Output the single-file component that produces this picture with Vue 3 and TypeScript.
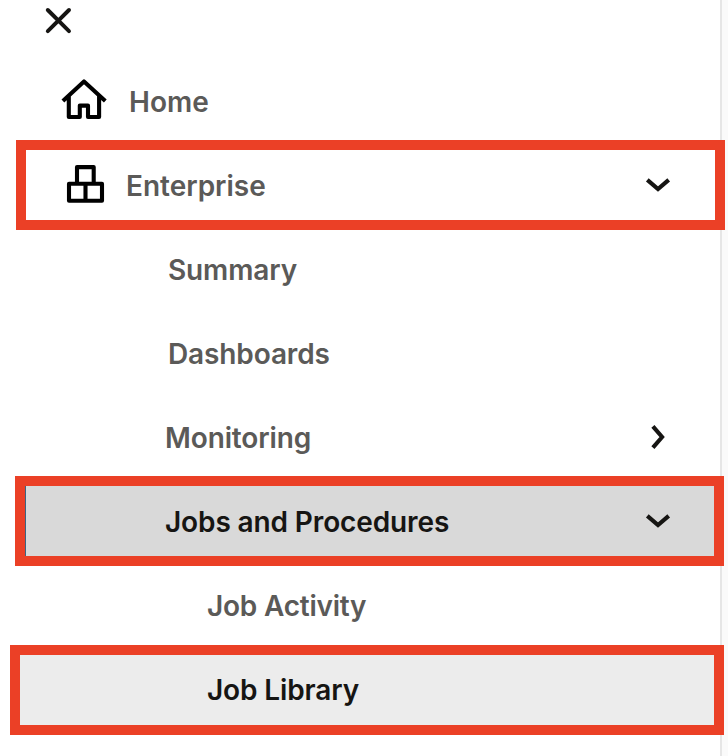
<script setup lang="ts">
interface NavItem {
  key: string
  label: string
  icon?: 'home' | 'enterprise'
  chevron?: 'down' | 'right'
  marked?: boolean
}

const items: NavItem[] = [
  { key: 'home', label: 'Home', icon: 'home' },
  { key: 'enterprise', label: 'Enterprise', icon: 'enterprise', chevron: 'down', marked: true },
  { key: 'summary', label: 'Summary' },
  { key: 'dashboards', label: 'Dashboards' },
  { key: 'monitoring', label: 'Monitoring', chevron: 'right' },
  { key: 'jobs', label: 'Jobs and Procedures', chevron: 'down', marked: true },
  { key: 'activity', label: 'Job Activity' },
  { key: 'library', label: 'Job Library', marked: true },
]
</script>

<template>
  <div class="page">
    <aside class="drawer">
      <header class="top">
        <button class="close" aria-label="Close">
          <svg width="28" height="28" viewBox="0 0 28 28">
            <path d="M2.8 3 24 24.2M24 3 2.8 24.2" />
          </svg>
        </button>
      </header>
      <nav class="nav">
        <a v-for="item in items" :key="item.key" class="row" :class="item.key">
          <svg v-if="item.icon === 'home'" class="icon" width="48" height="44" viewBox="0 0 48 44">
            <path d="M2.9 24 24 4.4 45.3 24M8.8 19V40H19.8V28.6H28V40H39.1V19" />
          </svg>
          <svg v-else-if="item.icon === 'enterprise'" class="icon" width="40" height="40" viewBox="0 0 40 40">
            <path d="M4 19.7H37V36.7H4ZM12 19.7V3.1H28.7V19.7M20.5 19.7V36.7" />
          </svg>
          <span class="label">{{ item.label }}</span>
          <svg v-if="item.chevron" class="chevron" :class="item.chevron" width="28" height="28" viewBox="0 0 28 28">
            <path v-if="item.chevron === 'down'" d="M3.3 8.9 14 18.1 24.7 8.9" />
            <path v-else d="M8.9 3.3 18.1 14 8.9 24.7" />
          </svg>
          <span v-if="item.marked" class="marker"></span>
        </a>
      </nav>
    </aside>
  </div>
</template>

<style>
body {
  background: #fafafa;
}
</style>

<style scoped>
.page {
  height: 756px;
  overflow: hidden;
  background: #fafafa;
  font-family: Inter, "Liberation Sans", sans-serif;
}
.drawer {
  box-sizing: border-box;
  width: 722px;
  height: 756px;
  background: #fff;
  border-right: 2px solid #e6e6e6;
}
.top {
  height: 60px;
  box-sizing: border-box;
  padding: 7px 0 0 45px;
}
.close {
  display: block;
  padding: 0;
  border: 0;
  background: none;
}
svg {
  display: block;
  flex: none;
  fill: none;
}
.close path {
  stroke: #161513;
  stroke-width: 3.9;
  stroke-linecap: round;
}
.nav {
  padding-left: 20px;
}
.row {
  position: relative;
  display: flex;
  align-items: center;
  box-sizing: border-box;
  height: 84px;
  padding-right: 48px;
  color: #5b5a58;
  font-size: 28px;
  font-weight: 640;
  line-height: 34px;
  letter-spacing: -0.12px;
  white-space: nowrap;
}
.icon path {
  stroke: #000;
  stroke-width: 4.1;
  stroke-linejoin: round;
}
.home { padding-left: 40px; letter-spacing: 0; }
.home .icon { margin: -6px 21px 0 0; }
.enterprise { padding-left: 45px; letter-spacing: 0; }
.enterprise .icon { margin: -4px 21px 0 0; }
.summary { padding-left: 148px; }
.dashboards { padding-left: 148px; }
.monitoring { padding-left: 145px; }
.jobs {
  padding-left: 139px;
  border-left: 6px solid #3c6482;
  background: #d9d9d9;
  color: #161513;
}
.activity { padding-left: 187px; letter-spacing: -0.22px; }
.library {
  padding-left: 187px;
  background: #ececec;
  color: #161513;
}
.chevron {
  margin: -2px 0 0 auto;
}
.chevron path {
  stroke: #161513;
  stroke-width: 4.1;
}
.marker {
  position: absolute;
  box-sizing: border-box;
  height: 90px;
  border: 10px solid #eb4026;
}
.enterprise .marker { left: -4px; top: -4px; width: 709px; }
.jobs .marker { left: -11px; top: -4px; width: 709px; }
.library .marker { left: -10px; top: -3px; width: 714px; }
</style>
